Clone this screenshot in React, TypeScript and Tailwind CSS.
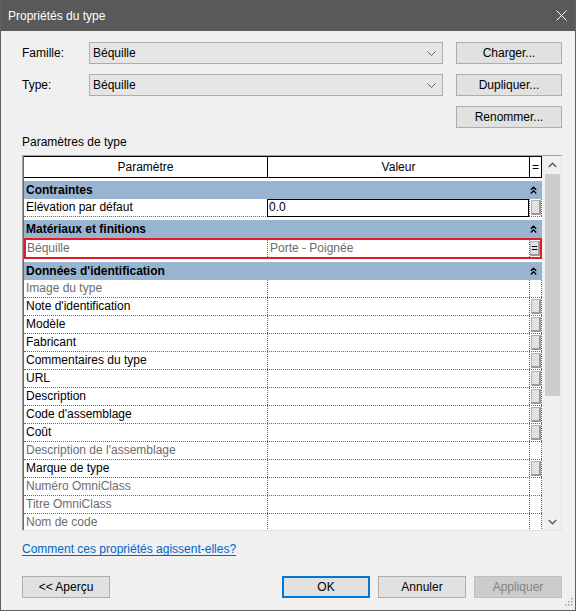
import React from "react";

type Row =
  | { kind: "group"; label: string }
  | {
      kind: "row";
      label: string;
      value?: string;
      gray?: boolean;
      btn?: boolean;
      edit?: boolean;
      selected?: boolean;
    };

const rows: Row[] = [
  { kind: "group", label: "Contraintes" },
  { kind: "row", label: "Elévation par défaut", value: "0.0", edit: true, btn: true },
  { kind: "group", label: "Matériaux et finitions" },
  { kind: "row", label: "Béquille", value: "Porte - Poignée", gray: true, selected: true },
  { kind: "group", label: "Données d'identification" },
  { kind: "row", label: "Image du type", gray: true },
  { kind: "row", label: "Note d'identification", btn: true },
  { kind: "row", label: "Modèle", btn: true },
  { kind: "row", label: "Fabricant", btn: true },
  { kind: "row", label: "Commentaires du type", btn: true },
  { kind: "row", label: "URL", btn: true },
  { kind: "row", label: "Description", btn: true },
  { kind: "row", label: "Code d'assemblage", btn: true },
  { kind: "row", label: "Coût", btn: true },
  { kind: "row", label: "Description de l'assemblage", gray: true },
  { kind: "row", label: "Marque de type", btn: true },
  { kind: "row", label: "Numéro OmniClass", gray: true },
  { kind: "row", label: "Titre OmniClass", gray: true },
  { kind: "row", label: "Nom de code", gray: true },
];

function DoubleCaret() {
  return (
    <svg width="7" height="8" viewBox="0 0 7 8">
      <path d="M0.8 3.8 L3.5 1.2 L6.2 3.8 M0.8 7.4 L3.5 4.8 L6.2 7.4" fill="none" stroke="#000" strokeWidth="1.4" />
    </svg>
  );
}

function SmallBtn({ eq }: { eq?: boolean }) {
  return (
    <div className="w-[10px] h-[15px] bg-[#e1e1e1] border border-[#b4b4b4] border-r-2 border-b-2 border-r-[#9a9a9a] border-b-[#9a9a9a] flex items-center justify-center text-[11px] leading-none text-black">
      {eq ? "=" : null}
    </div>
  );
}

function GridRow({ r }: { r: Extract<Row, { kind: "row" }> }) {
  const txt = r.gray ? "text-[#6d6d6d]" : "text-black";
  if (r.selected) {
    return (
      <div className="flex h-[21px] border-2 border-[#e51b24] bg-white">
        <div className={`w-[242px] border-r border-dotted border-[#6a6a6a] pl-[1px] leading-[17px] whitespace-nowrap overflow-hidden ${txt}`}>
          {r.label}
        </div>
        <div className={`w-[262px] border-r border-dotted border-[#6a6a6a] pl-[2px] leading-[17px] whitespace-nowrap overflow-hidden ${txt}`}>
          {r.value}
        </div>
        <div className="w-[10px] flex items-center justify-center">
          <SmallBtn eq />
        </div>
      </div>
    );
  }
  if (r.edit) {
    return (
      <div className="flex h-[18px] border-b border-dotted border-[#6a6a6a] bg-white">
        <div className={`w-[243px] pl-[2px] leading-[17px] whitespace-nowrap ${txt}`}>{r.label}</div>
        <div className="w-[262px] h-[18px] border-[1.5px] border-black pl-[1px] leading-[15px] text-black">{r.value}</div>
        <div className="w-[13px] border-l border-r border-dotted border-[#6a6a6a] flex items-center justify-center">
          <SmallBtn />
        </div>
      </div>
    );
  }
  return (
    <div className="flex h-[18px] border-b border-dotted border-[#6a6a6a] bg-white">
      <div className={`w-[244px] border-r border-dotted border-[#6a6a6a] pl-[2px] leading-[17px] whitespace-nowrap overflow-hidden ${txt}`}>
        {r.label}
      </div>
      <div className={`w-[262px] border-r border-dotted border-[#6a6a6a] pl-[2px] leading-[17px] whitespace-nowrap overflow-hidden ${txt}`}>
        {r.value ?? ""}
      </div>
      <div className="w-[12px] border-r border-dotted border-[#6a6a6a] flex items-center justify-center">
        {r.btn ? <SmallBtn /> : null}
      </div>
    </div>
  );
}

function Group({ label }: { label: string }) {
  return (
    <div className="h-[21px] pt-[3px] bg-white">
      <div className="h-[18px] bg-[#99b4d1] flex items-center pl-[2px] font-bold text-black">
        <span className="flex-1 leading-[18px]">{label}</span>
        <span className="w-[12px] flex justify-start pr-[5px]">
          <DoubleCaret />
        </span>
      </div>
    </div>
  );
}

function Combo({ text }: { text: string }) {
  return (
    <div className="w-[354px] h-[22px] bg-[#e5e5e5] border border-[#acacac] flex items-center pl-[3px] pr-[6px]">
      <span className="flex-1 leading-[20px]">{text}</span>
      <svg width="9" height="5" viewBox="0 0 9 5">
        <path d="M0.5 0.5 L4.5 4.5 L8.5 0.5" fill="none" stroke="#606060" strokeWidth="1" />
      </svg>
    </div>
  );
}

function Btn({ children, className = "" }: { children: React.ReactNode; className?: string }) {
  return (
    <div className={`h-[22px] bg-[#e1e1e1] border border-[#adadad] flex items-center justify-center text-black ${className}`}>
      {children}
    </div>
  );
}

export default function App() {
  return (
    <div className="relative w-[576px] h-[611px] bg-[#f0f0f0] border-x border-b border-[#5f5f5f] font-['Liberation_Sans',Arial,sans-serif] text-[12px] text-black select-none overflow-hidden">
      {/* Title bar */}
      <div className="h-[31px] bg-[#595959] flex items-center pl-[7px] pr-[8px] text-white">
        <span className="flex-1 text-[12px]">Propriétés du type</span>
        <svg width="11" height="11" viewBox="0 0 11 11">
          <path d="M0.5 0.5 L10.5 10.5 M10.5 0.5 L0.5 10.5" stroke="#fff" strokeWidth="1" />
        </svg>
      </div>

      <div className="pl-[21px] pr-[13px] pt-[11px] flex flex-col">
        <div className="flex items-center h-[22px]">
          <div className="w-[67px]">Famille:</div>
          <Combo text="Béquille" />
          <Btn className="ml-auto w-[106px]">Charger...</Btn>
        </div>
        <div className="flex items-center h-[22px] mt-[10px]">
          <div className="w-[67px]">Type:</div>
          <Combo text="Béquille" />
          <Btn className="ml-auto w-[106px]">Dupliquer...</Btn>
        </div>
        <div className="flex h-[22px] mt-[10px]">
          <Btn className="ml-auto w-[106px]">Renommer...</Btn>
        </div>

        <div className="mt-[6px] h-[16px] leading-[16px]">Paramètres de type</div>

        <div className="mt-[5px] h-[376px] flex border-t border-l border-r border-b border-t-[#a0a0a0] border-l-[#a0a0a0] border-r-[#e3e3e3] border-b-[#e3e3e3]">
          <div className="w-[519px] flex flex-col border-l border-[#696969] bg-white">
            <div className="flex h-[22px] border-t border-b border-black bg-white">
              <div className="w-[244px] border-r border-black flex items-center justify-center">Paramètre</div>
              <div className="w-[262px] border-r border-black flex items-center justify-center">Valeur</div>
              <div className="w-[12px] border-r border-black flex items-center justify-center">=</div>
            </div>
            <div className="flex-1 overflow-hidden flex flex-col">
              {rows.map((r, i) =>
                r.kind === "group" ? <Group key={i} label={r.label} /> : <GridRow key={i} r={r} />
              )}
            </div>
          </div>
          <div className="w-[17px] ml-[2px] bg-[#f0f0f0] flex flex-col">
            <div className="h-[17px] flex items-center justify-center">
              <svg width="9" height="6" viewBox="0 0 9 6">
                <path d="M0.8 5 L4.5 1.3 L8.2 5" fill="none" stroke="#606060" strokeWidth="1.6" />
              </svg>
            </div>
            <div className="mx-[1px] mt-[1px] h-[222px] bg-[#cdcdcd]" />
            <div className="flex-1" />
            <div className="h-[17px] flex items-center justify-center">
              <svg width="9" height="6" viewBox="0 0 9 6">
                <path d="M0.8 1 L4.5 4.7 L8.2 1" fill="none" stroke="#606060" strokeWidth="1.6" />
              </svg>
            </div>
          </div>
        </div>

        <div className="mt-[10px] h-[16px] leading-[16px]">
          <span className="text-[#0066cc] underline underline-offset-[2px]">Comment ces propriétés agissent-elles?</span>
        </div>

        <div className="mt-[19px] flex items-center">
          <Btn className="w-[88px]">&lt;&lt; Aperçu</Btn>
          <div className="ml-auto flex gap-[8px]">
            <div className="w-[88px] h-[22px] bg-[#e1e1e1] border-2 border-[#0078d7] flex items-center justify-center">OK</div>
            <Btn className="w-[88px]">Annuler</Btn>
            <div className="w-[88px] h-[22px] bg-[#cccccc] border border-[#bfbfbf] flex items-center justify-center text-[#838383]">
              Appliquer
            </div>
          </div>
        </div>
      </div>

      <svg className="absolute right-[2px] bottom-[2px]" width="10" height="10" viewBox="0 0 10 10">
        <rect x="8" y="0" width="1.5" height="1.5" fill="#a0a0a0" />
        <rect x="5" y="3" width="1.5" height="1.5" fill="#a0a0a0" />
        <rect x="8" y="3" width="1.5" height="1.5" fill="#a0a0a0" />
        <rect x="2" y="6" width="1.5" height="1.5" fill="#a0a0a0" />
        <rect x="5" y="6" width="1.5" height="1.5" fill="#a0a0a0" />
        <rect x="8" y="6" width="1.5" height="1.5" fill="#a0a0a0" />
      </svg>
    </div>
  );
}
